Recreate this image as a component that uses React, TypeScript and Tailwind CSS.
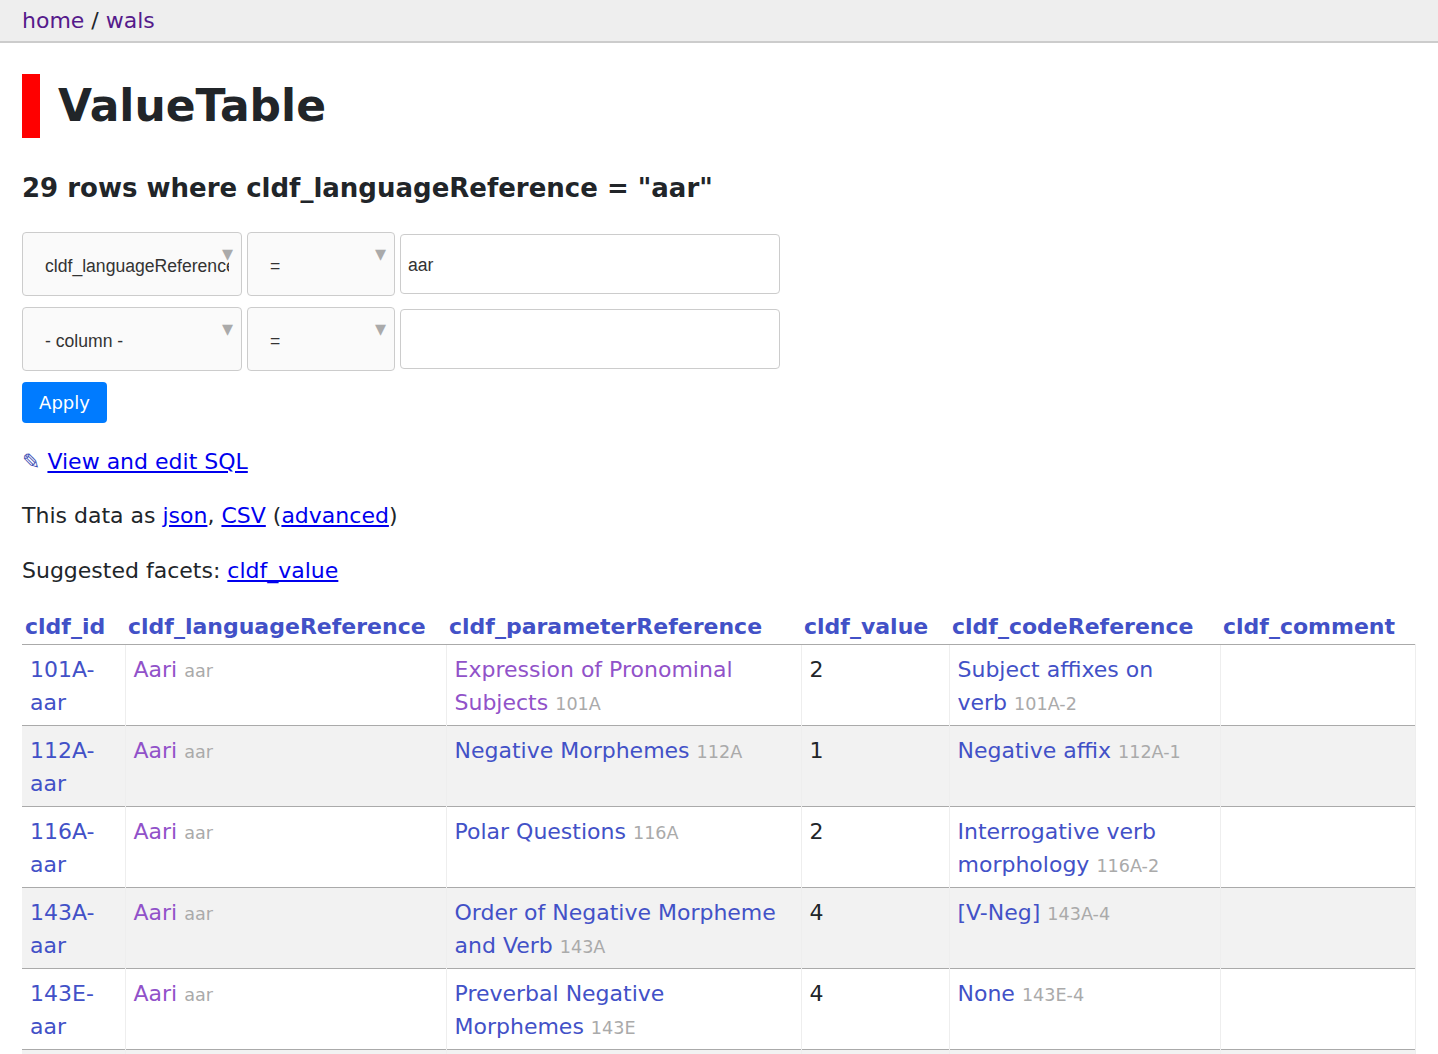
const rows = [
  {
    id: ['101A-', 'aar'],
    param: 'Expression of Pronominal Subjects',
    paramId: '101A',
    paramVisited: true,
    value: '2',
    code: 'Subject affixes on verb',
    codeId: '101A-2',
  },
  {
    id: ['112A-', 'aar'],
    param: 'Negative Morphemes',
    paramId: '112A',
    value: '1',
    code: 'Negative affix',
    codeId: '112A-1',
  },
  {
    id: ['116A-', 'aar'],
    param: 'Polar Questions',
    paramId: '116A',
    value: '2',
    code: 'Interrogative verb morphology',
    codeId: '116A-2',
  },
  {
    id: ['143A-', 'aar'],
    param: 'Order of Negative Morpheme and Verb',
    paramId: '143A',
    value: '4',
    code: '[V-Neg]',
    codeId: '143A-4',
  },
  {
    id: ['143E-', 'aar'],
    param: 'Preverbal Negative Morphemes',
    paramId: '143E',
    value: '4',
    code: 'None',
    codeId: '143E-4',
  },
  {
    id: ['143F-', 'aar'],
    param: 'Postverbal Negative Morphemes',
    paramId: '143F',
    value: '2',
    code: 'VNeg',
    codeId: '143F-2',
  },
];

const columns = [
  { name: 'cldf_id', w: 'w-[103px]' },
  { name: 'cldf_languageReference', w: 'w-[321px]' },
  { name: 'cldf_parameterReference', w: 'w-[355px]' },
  { name: 'cldf_value', w: 'w-[148px]' },
  { name: 'cldf_codeReference', w: 'w-[271px]' },
  { name: 'cldf_comment', w: 'w-[195px]' },
];

function FakeSelect({ label, width }: { label: string; width: string }) {
  return (
    <div
      className={`relative flex h-[64px] items-center overflow-hidden rounded-[4px] border border-[#ccc] bg-[#fafafa] pl-[22px] pr-[12px] ${width}`}
    >
      <span className="block overflow-hidden whitespace-nowrap pt-[4px] text-[17.6px] text-[#333]">{label}</span>
      <span className="absolute right-[8px] top-[10px] text-[22px] leading-[22px] text-[#aaa]">▾</span>
    </div>
  );
}

function FakeInput({ value }: { value: string }) {
  return (
    <div className="flex h-[60px] w-[380px] items-center rounded-[4px] border border-[#ccc] bg-white px-[7px] pt-[2px] text-[17.6px] text-[#333]">
      {value}
    </div>
  );
}

const td = 'border-t border-t-[#aaa] pl-[8px] pr-[14px] pt-[8px] pb-[6px] align-top';

export default function App() {
  return (
    <div className="min-h-screen bg-white font-['DejaVu_Sans',sans-serif] text-[22px] leading-[1.5] text-[#212529]">
      <nav className="border-b-2 border-[#ccc] bg-[#eee] px-[22px] py-[4px]">
        <a className="text-[#551a8b]">home</a> / <a className="text-[#551a8b]">wals</a>
      </nav>

      <div className="px-[22px]">
        <h1 className="mt-[31px] border-l-[18px] border-[#ff0000] pl-[18px] text-[44px] font-bold leading-[64px] text-[#212529]">
          ValueTable
        </h1>

        <h2 className="mt-[30px] text-[26px] font-bold leading-[40px]">
          29 rows where cldf_languageReference = "aar"
        </h2>

        <div className="mt-[24px] flex flex-col gap-[11px] font-['Liberation_Sans',sans-serif]">
          <div className="flex items-center gap-[5px]">
            <FakeSelect label="cldf_languageReference" width="w-[220px]" />
            <FakeSelect label="=" width="w-[148px]" />
            <FakeInput value="aar" />
          </div>
          <div className="flex items-center gap-[5px]">
            <FakeSelect label="- column -" width="w-[220px]" />
            <FakeSelect label="=" width="w-[148px]" />
            <FakeInput value="" />
          </div>
        </div>

        <button className="mt-[11px] h-[41px] w-[85px] rounded-[4px] bg-[#007bff] text-[18px] text-white">
          Apply
        </button>

        <p className="mt-[22px]">
          <a className="text-[#0000ee]">
            <span className="text-[#3f51b5]">✎</span> <span className="underline">View and edit SQL</span>
          </a>
        </p>

        <p className="mt-[21px]">
          This data as <a className="text-[#0000ee] underline">json</a>,{' '}
          <a className="text-[#0000ee] underline">CSV</a> (
          <a className="text-[#0000ee] underline">advanced</a>)
        </p>

        <p className="mt-[22px]">
          Suggested facets: <a className="text-[#0000ee] underline">cldf_value</a>
        </p>

        <table className="mt-[22px] table-fixed border-collapse">
          <thead>
            <tr>
              {columns.map((c) => (
                <th
                  key={c.name}
                  className={`whitespace-nowrap py-[1px] pl-[3px] pr-[8px] text-left font-bold text-[#4251c7] ${c.w}`}
                >
                  {c.name}
                </th>
              ))}
            </tr>
          </thead>
          <tbody>
            {rows.map((r, i) => (
              <tr key={r.id.join('')} className={i % 2 === 1 ? 'bg-[#f2f2f2]' : 'bg-white'}>
                <td className={td}>
                  <a className="text-[#4251c7]">
                    {r.id[0]}
                    <br />
                    {r.id[1]}
                  </a>
                </td>
                <td className={`${td} border-l border-l-[#eee]`}>
                  <a className="text-[#9152c9]">Aari</a>{' '}
                  <span className="text-[17.6px] text-[#aaa]">aar</span>
                </td>
                <td className={`${td} border-l border-l-[#eee]`}>
                  <a className={r.paramVisited ? 'text-[#9152c9]' : 'text-[#4251c7]'}>{r.param}</a>{' '}
                  <span className="text-[17.6px] text-[#aaa]">{r.paramId}</span>
                </td>
                <td className={`${td} border-l border-l-[#eee]`}>{r.value}</td>
                <td className={`${td} border-l border-l-[#eee]`}>
                  <a className="text-[#4251c7]">{r.code}</a>{' '}
                  <span className="text-[17.6px] text-[#aaa]">{r.codeId}</span>
                </td>
                <td className={`${td} border-l border-r border-l-[#eee] border-r-[#eee]`}></td>
              </tr>
            ))}
          </tbody>
        </table>
      </div>
    </div>
  );
}
